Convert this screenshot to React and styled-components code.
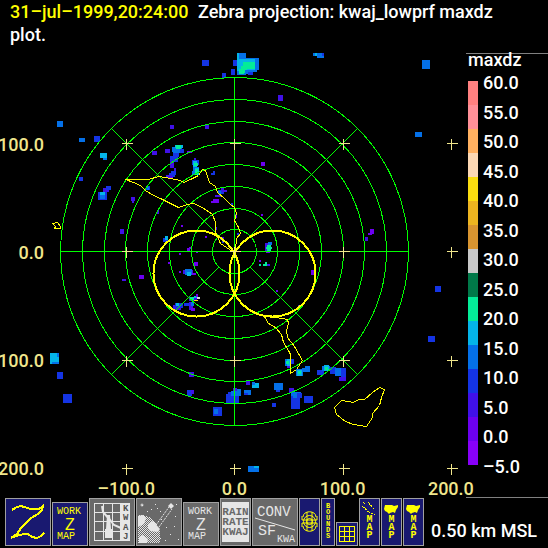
import React from "react";
import styled, { createGlobalStyle } from "styled-components";

const GlobalStyle = createGlobalStyle`
  * { box-sizing: border-box; }
  body {
    margin: 0;
    background: #000;
    color: #fff;
    font-family: Roboto, "Liberation Sans", Arial, sans-serif;
    font-size: 18px;
    font-weight: 500;
  }
`;

const YELLOW = "#ffff00";
const KHAKI = "#f0e68c";
const GREEN = "#00ff00";
const NAVY = "#191970";
const GRAY = "#696969";
const LIGHT = "#e6e6e6";

const Page = styled.main`
  display: flex;
  flex-direction: column;
`;

const Header = styled.header`
  min-height: 53px;
  padding: 0 32px 7px 10px;
  line-height: 23px;
`;

const Stamp = styled.time`
  color: ${YELLOW};
  margin-right: 5px;
`;

const Display = styled.section`
  display: grid;
  grid-template-columns: 46px 1fr 82px;
  grid-template-rows: auto 19px;
`;

const YAxis = styled.div`
  grid-area: 1 / 1;
  display: flex;
  flex-direction: column;
  justify-content: space-between;
  align-items: flex-end;
  padding: 82px 2px 0 0;
  line-height: 20px;
  color: ${KHAKI};
`;

const XAxis = styled.div`
  grid-area: 2 / 1 / 3 / 4;
  display: grid;
  grid-template-columns: repeat(4, 1fr);
  padding: 0 43px 0 72px;
  line-height: 20px;
  text-align: center;
  color: ${KHAKI};
`;

const Plot = styled.svg`
  grid-area: 1 / 2;
  display: block;
  width: 100%;
  height: auto;
`;

const Legend = styled.aside`
  grid-area: 1 / 3 / 3 / 4;
  display: flex;
  flex-direction: column;
  border-top: 1px solid #808080;
  border-bottom: 1px solid #808080;
  padding-bottom: 20px;
`;

const LegendTitle = styled.div`
  padding-left: 2px;
  line-height: 12px;
  height: 19px;
`;

const Scale = styled.div`
  flex: 1;
  display: flex;
  gap: 5px;
  padding-left: 2px;
`;

const Bar = styled.div`
  display: flex;
  flex-direction: column;
  width: 10px;
  margin: 8px 0 12px;
`;

const Band = styled.div`
  flex: 1;
  background: ${(p) => p.$color};
`;

const Ticks = styled.div`
  display: flex;
  flex-direction: column;
  justify-content: space-between;
  line-height: 20px;
`;

const Toolbar = styled.footer`
  display: flex;
  align-items: flex-end;
  gap: 1px;
  padding: 0 0 2px 5px;
`;

const Tool = styled.button`
  display: flex;
  flex-direction: column;
  flex: none;
  width: ${(p) => p.$w}px;
  height: ${(p) => p.$h || 48}px;
  padding: 0;
  border: 1px solid #a0a0a0;
  background: ${(p) => (p.$gray ? GRAY : NAVY)};
  color: ${(p) => (p.$gray ? LIGHT : YELLOW)};
  font-family: "Liberation Mono", monospace;
  overflow: hidden;
  cursor: pointer;
`;

const Icon = styled.svg`
  display: block;
  flex: none;
  fill: none;
  stroke: currentColor;

  text {
    fill: currentColor;
    stroke: none;
  }
`;

const SmallLine = styled.span`
  padding-left: 4px;
  font-size: 10px;
  line-height: 12px;
`;

const BigLine = styled.span`
  align-self: center;
  font-family: "Liberation Sans", sans-serif;
  font-size: 16px;
  line-height: 13px;
`;

const WorkFace = styled.span`
  display: flex;
  flex-direction: column;
  align-items: flex-start;
  padding-top: 3px;
`;

const RainFace = styled.span`
  margin: 3px 1px;
  padding: 5px 0;
  flex: 1;
  background: ${LIGHT};
  color: ${GRAY};
  font-size: 11px;
  font-weight: bold;
  line-height: 10px;
`;

const Stack = styled.span`
  align-self: center;
  width: 1ch;
  word-break: break-all;
  font-weight: bold;
  font-size: ${(p) => p.$size}px;
  line-height: ${(p) => p.$line}px;
  padding-top: ${(p) => p.$top || 0}px;
`;

const Status = styled.output`
  padding: 0 0 5px 6px;
  line-height: 20px;
  white-space: nowrap;
`;

const bands = [
  "#ff8080", "#ff9098", "#ffb060", "#fcd8b4", "#fadc10", "#ecb420", "#d89430", "#c8c8c8",
  "#007848", "#04ec98", "#04b4e8", "#0470e8", "#1434e4", "#4010e8", "#6c00f0", "#8800f8",
];

const ticks = [
  "60.0", "55.0", "50.0", "45.0", "40.0", "35.0", "30.0",
  "25.0", "20.0", "15.0", "10.0", "5.0", "0.0", "–5.0",
];

const echoColors = {
  g: "#04ec98", c: "#04b4e8", b: "#0470e8", a: "#1434e4", v: "#4010e8", p: "#6c00f0", k: "#fadc10", w: "#d8d8d8",
};

// Each echo: level, x, y, width, height
const echoes = `
a 202 60 7 6;a 233 60 4 6;a 231 69 4 6;a 222 73 4 5;b 237 53 9 22;b 246 58 11 14;b 257 58 2 12;a 248 72 5 3;
c 237 53 2 18;c 239 59 16 11;g 243 62 12 7;g 241 66 6 7;g 239 69 5 5;b 245 70 3 4;
b 313 53 2 3;c 315 53 2 3;b 317 53 7 5;a 322 53 2 3;b 422 60 8 9;v 278 95 5 6;b 415 132 7 5;
v 170 125 4 4;v 205 125 4 4;v 152 151 5 4;v 165 149 5 4;b 172 147 10 5;c 175 145 8 3;g 176 145 5 4;
a 180 149 4 4;b 173 150 7 3;a 173 153 6 4;a 170 156 8 6;v 170 161 4 7;p 187 151 5 2;
v 174 168 2 4;a 171 171 5 4;a 169 173 6 4;v 166 175 6 3;p 169 177 4 2;
v 194 158 2 3;a 192 160 7 5;c 193 161 4 7;g 194 163 4 3;b 193 167 6 4;c 195 168 4 7;g 195 169 3 6;b 192 171 3 4;
a 213 171 2 4;a 211 173 3 2;p 261 162 4 4;
v 221 188 3 6;a 218 190 6 4;b 218 191 3 3;v 215 195 7 2;v 222 190 5 2;p 211 201 8 2;p 213 199 6 2;a 231 203 2 2;
b 57 121 6 6;b 79 138 6 4;a 94 136 6 6;c 100 153 7 5;b 103 158 4 2;a 79 177 4 4;
v 103 188 6 4;a 106 186 5 4;a 98 192 9 8;c 100 192 5 3;b 100 195 5 4;
v 131 197 4 4;v 132 200 2 3;a 146 186 4 4;b 147 187 2 3;v 120 229 4 5;v 157 210 2 4;
a 163 238 5 4;c 165 236 3 4;p 139 275 5 4;v 122 279 4 2;p 168 262 2 2;
p 181 225 2 2;p 205 236 2 2;p 261 214 2 2;p 187 248 3 3;p 189 247 3 2;p 179 253 2 2;p 196 251 2 2;p 194 262 4 4;
v 183 270 10 4;b 185 269 7 6;c 187 272 4 4;p 179 271 2 2;p 192 273 4 2;
v 220 237 4 3;a 222 240 2 3;v 215 227 2 3;v 235 214 2 4;a 237 233 2 2;
v 265 243 3 8;b 268 242 4 3;g 267 245 4 7;g 266 247 6 2;p 266 251 4 2;
p 259 260 2 2;g 259 264 2 2;g 263 264 3 2;g 265 262 2 4;v 267 264 3 2;
p 276 290 2 2;v 298 305 3 3;p 311 270 3 5;
v 189 297 8 4;g 190 297 4 3;c 194 296 4 2;w 197 297 3 2;p 196 294 2 3;k 194 300 4 1;
v 173 305 8 5;a 175 303 8 5;c 176 303 3 3;a 184 303 8 3;v 189 302 4 8;b 191 302 3 4;p 191 308 4 3;
p 370 229 4 5;v 365 237 3 4;p 368 233 4 2;a 435 286 6 6;a 428 336 7 6;
c 50 353 9 11;b 57 353 2 4;b 52 362 7 2;a 57 372 6 7;a 63 394 9 9;v 189 372 5 5;
a 187 390 5 6;v 191 390 3 4;a 213 407 9 9;b 214 409 4 5;
a 226 394 13 9;a 228 392 8 4;b 231 391 10 5;v 233 388 4 3;b 237 389 4 6;
b 244 390 7 5;a 244 393 4 2;v 246 381 4 4;c 252 383 7 5;b 252 382 3 3;b 274 383 9 7;a 276 390 4 2;
a 272 403 4 4;v 289 388 5 5;b 291 392 10 4;a 291 396 9 13;a 296 393 6 5;b 293 393 4 5;a 304 396 9 7;
b 285 359 3 7;c 287 359 4 7;g 286 361 3 3;a 291 359 3 5;v 287 366 3 2;
b 296 369 7 7;c 297 370 5 6;g 298 371 3 3;b 302 368 8 4;b 305 366 5 6;
a 317 370 7 5;b 322 366 8 5;c 324 365 5 6;g 325 367 3 3;a 330 367 6 7;b 335 368 10 8;a 341 368 5 10;v 339 377 7 4;
b 248 466 11 6;c 254 466 5 2
`
  .split(";")
  .map((entry) => {
    const [level, ...box] = entry.trim().split(" ");
    return [level, ...box.map(Number)];
  });

const coasts = [
  "125,179 134,179 148,179 158,176 170,178 180,180 183,182 190,179 198,175 202,169 205,170 209,182 215,186 217,192 224,198 230,204 234,207 236,213 234,220 238,227 240,233 236,238 235,250",
  "125,179 133,182 140,185 145,190 153,195 160,198 178,207 187,204 193,203 202,207 212,214 215,222 215,232 220,243 232,251",
  "52,223 57,222 60,226 60,228 54,228 55,226 52,223",
  "264,316 268,323 275,327 281,334 283,342 288,350 290,354 290,373 296,369 302,360 294,346 287,337 286,330 288,323 287,319 275,317 264,316",
  "334,407 341,400 353,402 358,399 364,399 372,392 379,387 384,389 381,397 379,405 372,413 372,417 366,426 353,424 345,421 336,414 334,407",
];

const CX = 234;
const CY = 251;
const rings = [22, 43, 65, 87, 109, 130, 152, 174];
const crossX = [126, 234, 343, 451];
const crossY = [143, 251, 360, 468];

function RadarPlot() {
  return (
    <Plot viewBox="46 53 420 426" role="img" aria-label="Radar projection" shapeRendering="crispEdges">
      {echoes.map(([level, x, y, w, h], i) => (
        <rect key={i} x={x} y={y} width={w} height={h} fill={echoColors[level]} />
      ))}
      <g transform="translate(0.5 0.5)" fill="none">
        <g stroke={GREEN}>
          {rings.map((r) => (
            <circle key={r} cx={CX} cy={CY} r={r} />
          ))}
          <path d={`M${CX - 174} ${CY}H${CX + 174}M${CX} ${CY - 174}V${CY + 174}`} />
          {[[1, 1], [1, -1], [-1, 1], [-1, -1]].map(([dx, dy]) => (
            <line
              key={`${dx}${dy}`}
              x1={CX + 16 * dx}
              y1={CY + 16 * dy}
              x2={CX + 123 * dx}
              y2={CY + 123 * dy}
            />
          ))}
        </g>
        <g stroke={YELLOW}>
          {coasts.map((points) => (
            <polyline key={points} points={points} />
          ))}
          <circle cx="196" cy="273" r="43" strokeWidth="2" />
          <circle cx="272" cy="273" r="43" strokeWidth="2" />
        </g>
        <g stroke={KHAKI}>
          {crossX.flatMap((x) =>
            crossY.map((y) => <path key={`${x}-${y}`} d={`M${x - 5} ${y}h11M${x} ${y - 5}v11`} />)
          )}
        </g>
      </g>
    </Plot>
  );
}

function WorkMap({ gray }) {
  return (
    <Tool $w={36} $h={44} $gray={gray}>
      <WorkFace>
        <SmallLine>WORK</SmallLine>
        <BigLine>Z</BigLine>
        <SmallLine>MAP</SmallLine>
      </WorkFace>
    </Tool>
  );
}

function ZebraIcon() {
  return (
    <Icon width="44" height="46" viewBox="0 0 44 46" strokeWidth="2" shapeRendering="crispEdges">
      <path d="M6 11L9 9L14 7L19 8L24 10H33L37 7L36 11L32 15L25 19L20 24L15 29L11 35L5 39L10 37L18 35H22L26 38L31 39L35 37L38 34" />
    </Icon>
  );
}

function KwajIcon() {
  return (
    <Icon width="44" height="46" viewBox="0 0 44 46">
      <path shapeRendering="crispEdges" d="M4.5 4.5h35v37h-35zM13.5 4v38M22.5 4v38M30.5 4v38M4 13.5h36M4 22.5h36M4 32.5h36" />
      <path d="M12 7L13 13L20 21L24 26L31 29" strokeWidth="2" />
      <path d="M17 16h3l1 14h2v9h-8v-9h1z" fill="currentColor" stroke="none" />
      <path
        d="M31 5h8v8h-8zM31 14h8v8h-8zM31 23h8v9h-8zM31 33h8v8h-8z"
        fill="currentColor"
        shapeRendering="crispEdges"
      />
      <g fontSize="9" fontWeight="bold" color="#505050">
        <text x="33" y="12">K</text>
        <text x="33" y="21">W</text>
        <text x="33" y="31">A</text>
        <text x="33" y="40">J</text>
      </g>
    </Icon>
  );
}

function SatelliteIcon() {
  const stars = [[5, 6], [18, 5], [23, 12], [14, 10], [38, 17], [29, 28], [37, 27], [41, 40], [33, 35], [24, 20], [10, 12], [39, 5], [28, 41], [20, 9]];
  return (
    <Icon width="44" height="46" viewBox="0 0 44 46">
      <defs>
        <pattern id="dither" width="2" height="2" patternUnits="userSpaceOnUse">
          <path d="M0 0h1v1H0zM1 1h1v1H1z" fill={LIGHT} stroke="none" />
        </pattern>
      </defs>
      <path d="M1 16Q14 15 20 26Q25 34 23 44H1z" fill="url(#dither)" stroke="none" shapeRendering="crispEdges" />
      <path d="M1 17l5-1 3 3-2 6-6 3zM11 25l5-3 7 8-2 3-8-1-2-3zM2 38l4-2 5 4-1 4H2z" fill={LIGHT} stroke="none" />
      <path d="M19 26L32 8M22 28L35 10" strokeDasharray="2 1" />
      <path d="M31 7l3-3 3 3-3 3z" fill={LIGHT} stroke="none" />
      {stars.map(([x, y]) => (
        <rect key={`${x}-${y}`} x={x} y={y} width="1" height="1" fill={LIGHT} stroke="none" />
      ))}
      <circle cx="5" cy="6" r="1" />
    </Icon>
  );
}

function ConvIcon() {
  return (
    <Icon width="44" height="46" viewBox="0 0 44 46">
      <text x="4" y="17" fontSize="14">CONV</text>
      <path d="M2 19L42 31" />
      <text x="5" y="36" fontSize="15">SF</text>
      <text x="24" y="43" fontSize="10">KWA</text>
    </Icon>
  );
}

function GlobeIcon() {
  return (
    <Icon width="19" height="46" viewBox="0 0 19 46">
      <circle cx="9.5" cy="22.5" r="3" />
      <circle cx="9.5" cy="22.5" r="6" />
      <path d="M3 18C3 11 16 11 16 18M3 27C3 34 16 34 16 27M2 17v4h15v-4M2 28v-4h15v4M7 13v19M12 13v19" />
    </Icon>
  );
}

function GridIcon() {
  return (
    <Icon width="20" height="22" viewBox="0 0 20 22" shapeRendering="crispEdges">
      <path d="M2.5 3.5h15v15h-15zM7.5 3v16M12.5 3v16M2 8.5h16M2 13.5h16" />
    </Icon>
  );
}

function IslandsIcon() {
  return (
    <Icon width="19" height="17" viewBox="0 0 19 17" shapeRendering="crispEdges">
      <path d="M2 7L8 12M8 3L14 10M7 12L15 16M3 3L5 5" strokeDasharray="3 1" />
    </Icon>
  );
}

function UsaIcon() {
  return (
    <Icon width="19" height="17" viewBox="0 0 19 17">
      <path d="M3 6h7l2 1 4-1v2l-2 3-1 3-2-1-3 1-1 1-2-2-2-1-1-2z" fill="currentColor" stroke="none" />
    </Icon>
  );
}

export default function App() {
  return (
    <Page>
      <GlobalStyle />
      <Header>
        <Stamp>31–jul–1999,20:24:00</Stamp> <span>Zebra projection: kwaj_lowprf maxdz plot.</span>
      </Header>
      <Display>
        <YAxis>
          <span>100.0</span>
          <span>0.0</span>
          <span>100.0</span>
          <span>200.0</span>
        </YAxis>
        <RadarPlot />
        <XAxis>
          <span>–100.0</span>
          <span>0.0</span>
          <span>100.0</span>
          <span>200.0</span>
        </XAxis>
        <Legend>
          <LegendTitle>maxdz</LegendTitle>
          <Scale>
            <Bar>
              {bands.map((color) => (
                <Band key={color} $color={color} />
              ))}
            </Bar>
            <Ticks>
              {ticks.map((tick) => (
                <span key={tick}>{tick}</span>
              ))}
            </Ticks>
          </Scale>
        </Legend>
      </Display>
      <Toolbar>
        <Tool $w={46} aria-label="Zebra"><ZebraIcon /></Tool>
        <WorkMap />
        <Tool $w={46} $gray><KwajIcon /></Tool>
        <Tool $w={46} $gray aria-label="Satellite"><SatelliteIcon /></Tool>
        <WorkMap gray />
        <Tool $w={31} $gray>
          <RainFace>RAIN RATE KWAJ</RainFace>
        </Tool>
        <Tool $w={46} $gray><ConvIcon /></Tool>
        <Tool $w={21} aria-label="Range rings"><GlobeIcon /></Tool>
        <Tool $w={14}><Stack $size={7} $line={6} $top={4}>BOUNDS</Stack></Tool>
        <Tool $w={22} $h={24} aria-label="Grid"><GridIcon /></Tool>
        <Tool $w={21}><IslandsIcon /><Stack $size={10} $line={8}>MAP</Stack></Tool>
        <Tool $w={21}><UsaIcon /><Stack $size={10} $line={8}>MAP</Stack></Tool>
        <Tool $w={21}><UsaIcon /><Stack $size={10} $line={8}>MAP</Stack></Tool>
        <Status>0.50 km MSL</Status>
      </Toolbar>
    </Page>
  );
}
